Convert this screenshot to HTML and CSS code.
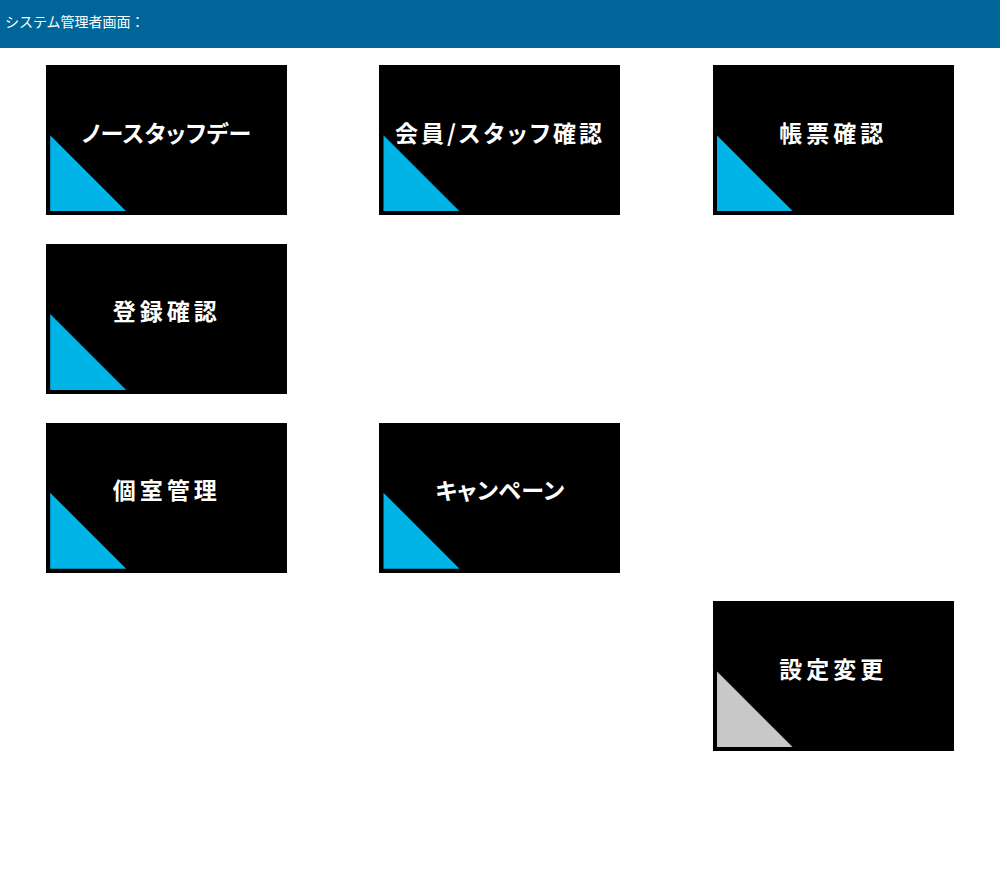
FILE: index.html
```html
<!DOCTYPE html>
<html lang="ja">
<head>
<meta charset="utf-8">
<title>システム管理者画面</title>
<link rel="stylesheet" href="styles.css">
</head>
<body>
<header class="topbar">システム管理者画面：</header>
<main class="menu">
  <a class="tile c1 r1" href="#"><span class="label label-kana">ノースタッフデー</span><span class="corner"></span></a>
  <a class="tile c2 r1" href="#"><span class="label label-mixed">会員/スタッフ確認</span><span class="corner"></span></a>
  <a class="tile c3 r1" href="#"><span class="label">帳票確認</span><span class="corner"></span></a>
  <a class="tile c1 r2" href="#"><span class="label">登録確認</span><span class="corner"></span></a>
  <a class="tile c1 r3" href="#"><span class="label">個室管理</span><span class="corner"></span></a>
  <a class="tile c2 r3" href="#"><span class="label label-kana">キャンペーン</span><span class="corner"></span></a>
  <a class="tile c3 r4" href="#"><span class="label">設定変更</span><span class="corner corner-gray"></span></a>
</main>
</body>
</html>
```
FILE: styles.css
```css
html, body {
  margin: 0;
  padding: 0;
  background: #ffffff;
}
body {
  font-family: "Noto Sans CJK JP", "Noto Sans", sans-serif;
}
.topbar {
  box-sizing: border-box;
  height: 48px;
  background: #006699;
  color: #ffffff;
  font-size: 14px;
  line-height: 20px;
  padding: 11px 5px 0;
}
.menu {
  display: grid;
  grid-template-columns: repeat(3, 1fr);
  grid-auto-rows: 150px;
  row-gap: 28.7px;
  padding-top: 17.3px;
  justify-items: center;
}
.c1 { grid-column: 1; }
.c2 { grid-column: 2; }
.c3 { grid-column: 3; }
.r1 { grid-row: 1; }
.r2 { grid-row: 2; }
.r3 { grid-row: 3; }
.r4 { grid-row: 4; }
.tile {
  position: relative;
  box-sizing: border-box;
  width: 241px;
  height: 150px;
  background: #000000;
  display: flex;
  align-items: center;
  justify-content: center;
  padding-bottom: 16px;
  text-decoration: none;
  overflow: hidden;
}
.label {
  position: relative;
  z-index: 1;
  color: #ffffff;
  font-weight: bold;
  font-size: 23px;
  letter-spacing: 4px;
  line-height: 1;
  white-space: nowrap;
  font-feature-settings: "palt";
}
.label-kana {
  letter-spacing: 0.5px;
}
.label-mixed {
  letter-spacing: 3px;
}
.corner {
  position: absolute;
  left: 4px;
  bottom: 4px;
  width: 76px;
  height: 76px;
  background: #00b4e8;
  clip-path: polygon(0 0, 0 100%, 100% 100%);
}
.corner-gray {
  background: #c8c8c8;
}
```
